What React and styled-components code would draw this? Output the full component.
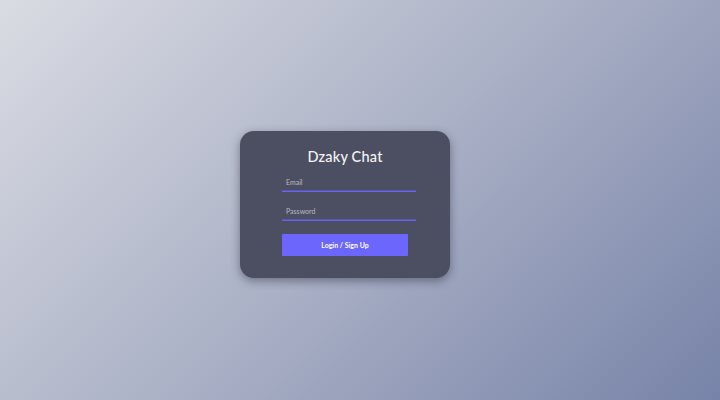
import React from "react";
import styled, { createGlobalStyle } from "styled-components";

const GlobalStyle = createGlobalStyle`
  html, body {
    margin: 0;
    padding: 0;
  }
  body {
    font-family: "Lato", "Open Sans", sans-serif;
  }
`;

const Page = styled.div`
  display: flex;
  justify-content: center;
  align-items: center;
  width: 100%;
  height: 400px;
  background: linear-gradient(135deg, #dadce3 0%, #abb1c6 50%, #7783a8 100%);
`;

const Card = styled.form`
  display: flex;
  flex-direction: column;
  align-items: center;
  box-sizing: border-box;
  width: 210px;
  height: 147px;
  margin: 9px 30px 0 0;
  padding: 17px 0 0;
  border-radius: 14px;
  background-color: #4b4f61;
  box-shadow: 0 3px 10px rgba(30, 34, 50, 0.45);
  color: #fff;
`;

const Title = styled.h1`
  margin: 0 0 6px;
  font-size: 14.5px;
  line-height: 18px;
  font-weight: 500;
  letter-spacing: 0.2px;
  color: #f4f4f6;
`;

const Field = styled.div`
  width: 134px;
  height: 20px;
  margin-left: 8px;
  margin-bottom: 9px;
  box-shadow: inset 0 -1.5px 0 #6a62f0;
`;

const Input = styled.input`
  display: block;
  box-sizing: border-box;
  width: 100%;
  height: 100%;
  padding: 0 4px 1px;
  border: none;
  background: transparent;
  color: #fff;
  font-family: inherit;
  font-size: 7px;
  outline: none;

  &::placeholder {
    color: #b9bbc6;
  }
`;

const Submit = styled.button`
  width: 126px;
  height: 22px;
  margin-top: 4px;
  border: none;
  border-radius: 1px;
  background-color: #6c66fc;
  color: #fff;
  font-family: inherit;
  font-size: 7px;
  font-weight: 700;
  cursor: pointer;
`;

const App = () => {
  return (
    <>
      <GlobalStyle />
      <Page>
        <Card onSubmit={(e) => e.preventDefault()}>
          <Title>Dzaky Chat</Title>
          <Field>
            <Input type="email" placeholder="Email" />
          </Field>
          <Field>
            <Input type="password" placeholder="Password" />
          </Field>
          <Submit type="submit">Login / Sign Up</Submit>
        </Card>
      </Page>
    </>
  );
};

export default App;
